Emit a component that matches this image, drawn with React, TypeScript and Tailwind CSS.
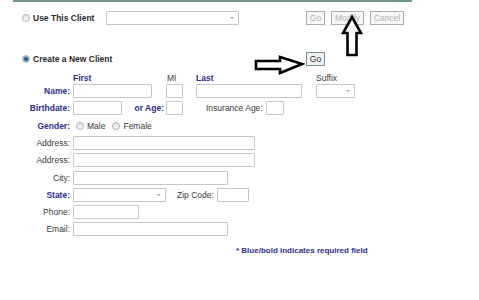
import type { ReactNode } from 'react';

const font = { fontFamily: '"Liberation Sans", Arial, sans-serif' };

function Radio({ checked = false }: { checked?: boolean }) {
  return (
    <span className="flex h-[8px] w-[8px] shrink-0 items-center justify-center rounded-full border border-[#a9b0b4] bg-[linear-gradient(180deg,#e3e6e8_0%,#f7f8f9_100%)]">
      {checked && <span className="h-[4px] w-[4px] rounded-full bg-[#2d5c8c] ring-1 ring-[#8fb0cc]" />}
    </span>
  );
}

function Input({ w }: { w: string }) {
  return <span className={`block h-[14px] ${w} rounded-[1px] border border-[#c6c6c6] bg-white`} />;
}

function Select({ w }: { w: string }) {
  return (
    <span className={`relative block h-[14px] ${w} rounded-[1px] border border-[#c6c6c6] bg-white`}>
      <span className="absolute right-[4px] top-[5px] h-0 w-0 border-x-[2px] border-t-[2px] border-x-transparent border-t-[#a8a8a8]" />
    </span>
  );
}

function Btn({ label, w, active = false }: { label: string; w: string; active?: boolean }) {
  return (
    <span
      className={`flex h-[14px] ${w} items-center justify-center border text-[8.5px] ${
        active ? 'border-[#7f8f8f] bg-[#eef2f2] text-[#333]' : 'border-[#a6b0b0] bg-[#f6f7f7] text-[#b3b3b3]'
      }`}
    >
      {label}
    </span>
  );
}

function Row({ label, req = false, mt, children }: { label: string; req?: boolean; mt: string; children: ReactNode }) {
  return (
    <div className={`flex h-[14px] items-center ${mt}`}>
      <span
        className={`w-[71px] shrink-0 pr-[1px] text-right text-[8.5px] leading-[10px] ${
          req ? 'font-bold text-[#2e2e8c]' : 'text-[#3a3a3a]'
        }`}
      >
        {label}
      </span>
      <span className="ml-[2px] flex items-center">{children}</span>
    </div>
  );
}

export default function App() {
  return (
    <main className="relative h-[300px] w-[479px] overflow-hidden bg-white" style={font}>
      <div className="ml-[13px] h-[2px] w-[399px] bg-[#6e9889]" />

      <div className="mt-[8px] flex h-[16px] items-center">
        <span className="flex w-[106px] items-center gap-[3px] pl-[22px] text-[8.5px] font-bold text-[#2a2a2a]">
          <Radio />
          Use This Client
        </span>
        <Select w="w-[133px]" />
        <span className="ml-[67px] flex items-center gap-[6px]">
          <Btn label="Go" w="w-[19px]" />
          <Btn label="Modify" w="w-[33px]" />
          <Btn label="Cancel" w="w-[34px]" />
        </span>
      </div>

      <div className="mt-[26px] flex h-[14px] items-center">
        <span className="flex w-[306px] items-center gap-[3px] pl-[22px] text-[8.5px] font-bold text-[#2a2a2a]">
          <Radio checked />
          Create a New Client
        </span>
        <Btn label="Go" w="w-[19px]" active />
      </div>

      <div className="mt-[7px] flex h-[10px] items-center text-[8.5px] leading-[10px]">
        <span className="ml-[73px] w-[93px] font-bold text-[#2e2e8c]">First</span>
        <span className="ml-[1px] w-[29px] text-[#3a3a3a]">MI</span>
        <span className="w-[120px] font-bold text-[#2e2e8c]">Last</span>
        <span className="text-[#3a3a3a]">Suffix</span>
      </div>

      <Row label="Name:" req mt="mt-[1px]">
        <Input w="w-[79px]" />
        <span className="ml-[14px]"><Input w="w-[17px]" /></span>
        <span className="ml-[13px]"><Input w="w-[106px]" /></span>
        <span className="ml-[14px]"><Select w="w-[39px]" /></span>
      </Row>

      <Row label="Birthdate:" req mt="mt-[3px]">
        <Input w="w-[49px]" />
        <span className="w-[44px] pr-[2px] text-right text-[8.5px] font-bold text-[#2e2e8c]">or Age:</span>
        <Input w="w-[17px]" />
        <span className="ml-[23px] mr-[3px] text-[8.5px] text-[#3a3a3a]">Insurance Age:</span>
        <Input w="w-[18px]" />
      </Row>

      <Row label="Gender:" req mt="mt-[4px]">
        <span className="ml-[3px] flex items-center gap-[3px] text-[8.5px] text-[#3a3a3a]">
          <Radio />
          Male
          <span className="ml-[4px]"><Radio /></span>
          Female
        </span>
      </Row>

      <Row label="Address:" mt="mt-[3px]">
        <Input w="w-[182px]" />
      </Row>
      <Row label="Address:" mt="mt-[3px]">
        <Input w="w-[182px]" />
      </Row>
      <Row label="City:" mt="mt-[4px]">
        <Input w="w-[155px]" />
      </Row>
      <Row label="State:" req mt="mt-[3px]">
        <Select w="w-[93px]" />
        <span className="ml-[11px] mr-[3px] text-[8.5px] text-[#3a3a3a]">Zip Code:</span>
        <Input w="w-[32px]" />
      </Row>
      <Row label="Phone:" mt="mt-[3px]">
        <Input w="w-[66px]" />
      </Row>
      <Row label="Email:" mt="mt-[3px]">
        <Input w="w-[155px]" />
      </Row>

      <p className="mt-[10px] pl-[236px] text-[8px] font-bold leading-[10px] text-[#2e2e8c]">
        * Blue/bold indicates required field
      </p>

      <svg className="absolute left-[341px] top-[14px]" width="22" height="44" viewBox="0 0 22 44">
        <path d="M11 3 L20 19 L15.5 19 L15.5 41 L6.5 41 L6.5 19 L2 19 Z" fill="white" stroke="black" strokeWidth="2.6" strokeLinejoin="miter" />
      </svg>

      <svg className="absolute left-[253px] top-[54px]" width="52" height="22" viewBox="0 0 52 22">
        <path d="M3 7 L27 7 L27 3 L49 10 L27 19 L27 15 L3 15 Z" fill="white" stroke="black" strokeWidth="2.6" strokeLinejoin="miter" />
      </svg>
    </main>
  );
}
